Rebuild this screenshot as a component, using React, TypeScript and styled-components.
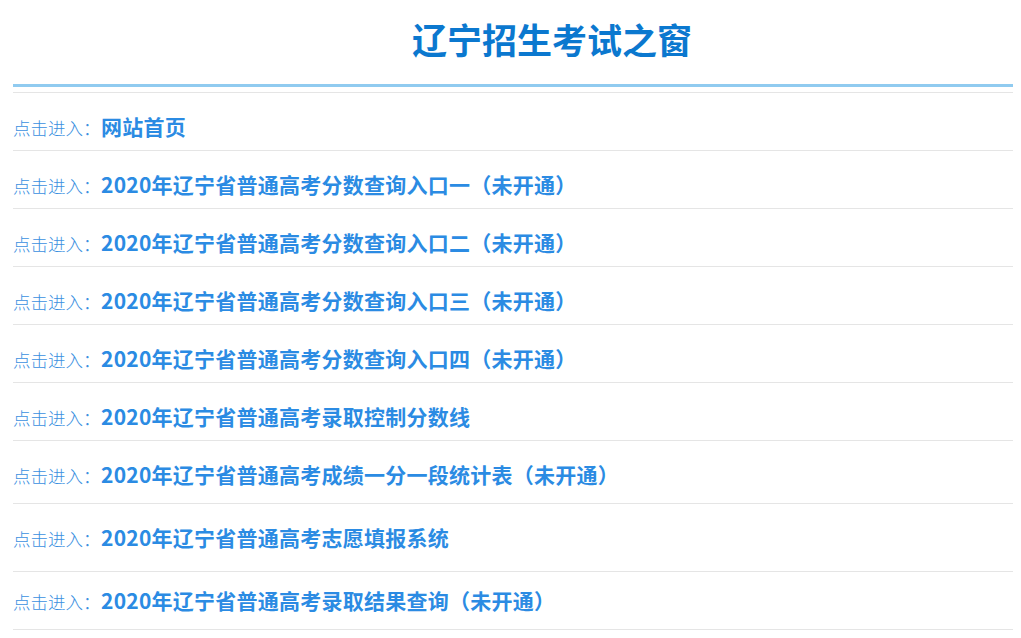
import React from 'react'
import styled, { createGlobalStyle } from 'styled-components'

interface Entry {
  title: string
  top?: number
  bottom?: number
}

const entries: Entry[] = [
  { title: '网站首页' },
  { title: '2020年辽宁省普通高考分数查询入口一（未开通）' },
  { title: '2020年辽宁省普通高考分数查询入口二（未开通）' },
  { title: '2020年辽宁省普通高考分数查询入口三（未开通）' },
  { title: '2020年辽宁省普通高考分数查询入口四（未开通）' },
  { title: '2020年辽宁省普通高考录取控制分数线' },
  { title: '2020年辽宁省普通高考成绩一分一段统计表（未开通）', bottom: 14 },
  { title: '2020年辽宁省普通高考志愿填报系统', bottom: 19 },
  { title: '2020年辽宁省普通高考录取结果查询（未开通）', top: 13, bottom: 14 },
]

const App: React.FC = () => {
  return (
    <>
      <GlobalStyle />
      <StyledPage>
        <StyledHeader>
          <StyledTitle>辽宁招生考试之窗</StyledTitle>
        </StyledHeader>
        <StyledRule />
        <StyledList>
          {entries.map((entry, i) => (
            <StyledRow key={i} $top={entry.top} $bottom={entry.bottom}>
              <StyledLabel>点击进入：</StyledLabel>
              <StyledLink href="#">{entry.title}</StyledLink>
            </StyledRow>
          ))}
        </StyledList>
      </StyledPage>
    </>
  )
}

const GlobalStyle = createGlobalStyle`
  body {
    margin: 0;
    background: #ffffff;
    font-family: "Noto Sans CJK SC", "Noto Sans", sans-serif;
  }
`

const StyledPage = styled.div`
  width: 1000px;
  margin-left: 13px;
`

const StyledHeader = styled.div`
  display: flex;
  align-items: center;
  justify-content: center;
  height: 76px;
  padding: 0 0 8px 78px;
`

const StyledTitle = styled.h1`
  margin: 0;
  font-size: 35px;
  font-weight: 700;
  line-height: 1;
  color: #0b78cf;
`

const StyledRule = styled.div`
  height: 3px;
  background: #90cbf0;
  margin-bottom: 5px;
`

const StyledList = styled.div`
  border-top: 1px solid #e5e5e5;
`

const StyledRow = styled.div<{ $top?: number; $bottom?: number }>`
  display: flex;
  align-items: baseline;
  height: 30px;
  line-height: 30px;
  padding-top: ${(p) => p.$top ?? 18}px;
  padding-bottom: ${(p) => p.$bottom ?? 9}px;
  border-bottom: 1px solid #e5e5e5;
`

const StyledLabel = styled.span`
  width: 88px;
  font-size: 17.5px;
  font-weight: 300;
  color: #3b90df;
`

const StyledLink = styled.a`
  font-size: 21px;
  font-weight: 700;
  letter-spacing: 0.25px;
  color: #2b8be3;
  text-decoration: none;
`

export default App
